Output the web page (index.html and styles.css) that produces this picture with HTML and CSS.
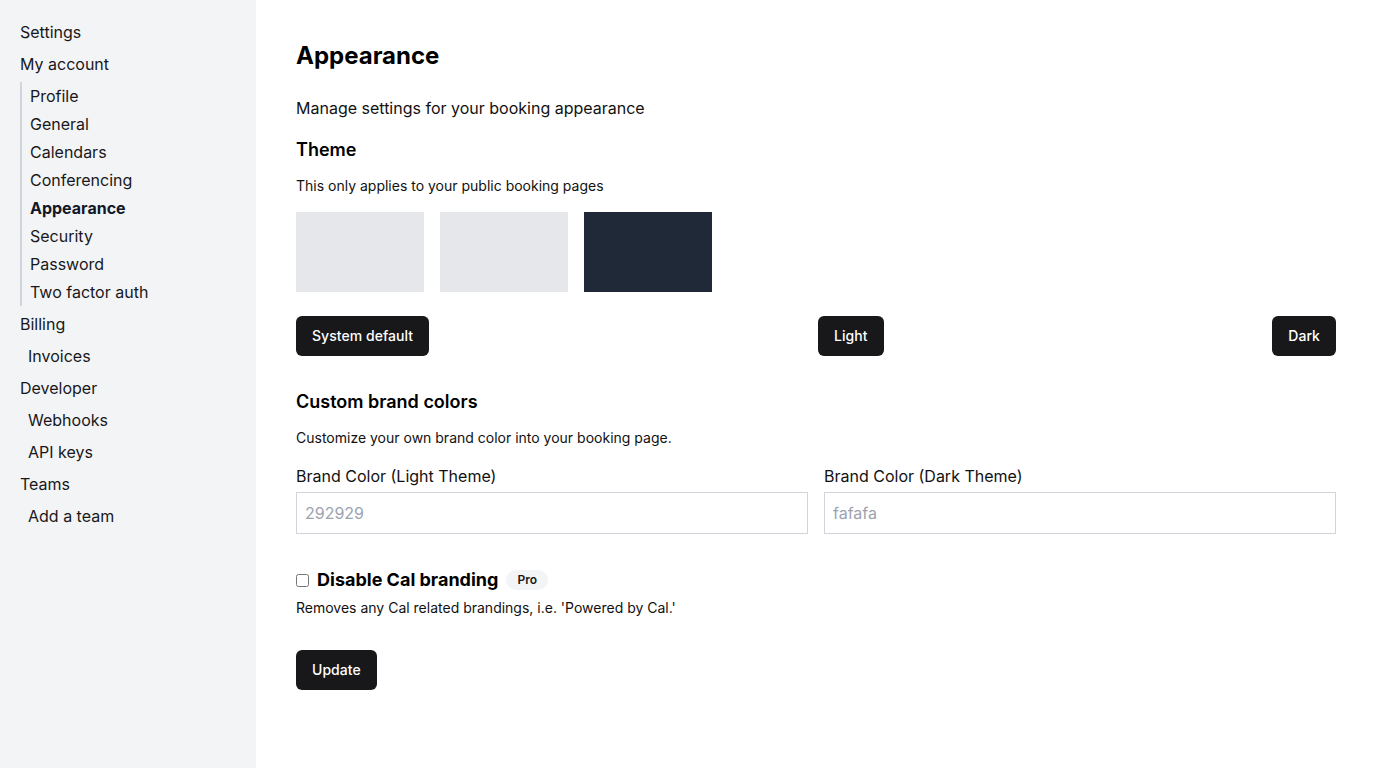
FILE: index.html
```html
<!DOCTYPE html>
<html>
<head>
<meta charset="utf-8">
<link rel="stylesheet" href="styles.css">
</head>
<body>
<div class="layout">
  <nav class="sidebar">
    <div class="nav-top">Settings</div>
    <div class="nav-top">My account</div>
    <div class="nav-group">
      <div class="nav-sub">Profile</div>
      <div class="nav-sub">General</div>
      <div class="nav-sub">Calendars</div>
      <div class="nav-sub">Conferencing</div>
      <div class="nav-sub active">Appearance</div>
      <div class="nav-sub">Security</div>
      <div class="nav-sub">Password</div>
      <div class="nav-sub">Two factor auth</div>
    </div>
    <div class="nav-top">Billing</div>
    <div class="nav-child">Invoices</div>
    <div class="nav-top">Developer</div>
    <div class="nav-child">Webhooks</div>
    <div class="nav-child">API keys</div>
    <div class="nav-top">Teams</div>
    <div class="nav-child">Add a team</div>
  </nav>
  <main class="main">
    <h1 class="title">Appearance</h1>
    <p class="lead">Manage settings for your booking appearance</p>
    <h2 class="section-title theme-title">Theme</h2>
    <p class="hint">This only applies to your public booking pages</p>
    <div class="swatches">
      <div class="swatch light"></div>
      <div class="swatch light"></div>
      <div class="swatch dark"></div>
    </div>
    <div class="theme-buttons">
      <button class="btn">System default</button>
      <button class="btn">Light</button>
      <button class="btn">Dark</button>
    </div>
    <h2 class="section-title brand-title">Custom brand colors</h2>
    <p class="hint">Customize your own brand color into your booking page.</p>
    <div class="brand-grid">
      <label class="field">
        <span class="field-label">Brand Color (Light Theme)</span>
        <input class="field-input" type="text" placeholder="292929">
      </label>
      <label class="field">
        <span class="field-label">Brand Color (Dark Theme)</span>
        <input class="field-input" type="text" placeholder="fafafa">
      </label>
    </div>
    <div class="branding-row">
      <input class="check" type="checkbox">
      <span class="branding-label">Disable Cal branding</span>
      <span class="badge">Pro</span>
    </div>
    <p class="hint branding-hint">Removes any Cal related brandings, i.e. 'Powered by Cal.'</p>
    <button class="btn update">Update</button>
  </main>
</div>
</body>
</html>
```

FILE: styles.css
```css
* { box-sizing: border-box; }
html, body { margin: 0; padding: 0; }
body {
  font-family: Inter, "Noto Sans", sans-serif;
  color: #111827;
  background: #fff;
}
.layout {
  display: flex;
  min-height: 768px;
}
.sidebar {
  width: 256px;
  flex: 0 0 256px;
  background: #f3f4f6;
  padding: 16px 20px;
  font-size: 16px;
  color: #18181b;
}
.nav-top {
  height: 32px;
  line-height: 32px;
}
.nav-group {
  margin: 2px 0;
  border-left: 2px solid #d1d5db;
  padding-left: 8px;
}
.nav-sub {
  height: 28px;
  line-height: 28px;
}
.nav-sub.active { font-weight: 700; color: #111827; }
.nav-child {
  height: 32px;
  line-height: 32px;
  padding-left: 8px;
}
.main {
  flex: 1;
  padding: 40px 40px;
  color: #000;
}
.title {
  margin: 1px 0 0;
  font-size: 24px;
  line-height: 30px;
  font-weight: 700;
}
.lead {
  margin: 25px 0 0;
  font-size: 16px;
  line-height: 24px;
  color: #111;
}
.section-title {
  margin: 0;
  font-size: 18px;
  line-height: 28px;
  font-weight: 600;
}
.theme-title { margin-top: 16px; }
.brand-title { margin-top: 32px; }
.hint {
  margin: 12px 0 0;
  font-size: 14px;
  line-height: 20px;
  color: #111;
}
.swatches {
  margin-top: 16px;
  display: flex;
  gap: 16px;
}
.swatch {
  width: 128px;
  height: 80px;
}
.swatch.light { background: #e5e7eb; }
.swatch.dark { background: #1f2937; }
.theme-buttons {
  margin-top: 24px;
  display: flex;
  justify-content: space-between;
}
.btn {
  height: 40px;
  padding: 0 16px 1px;
  border: 0;
  border-radius: 6px;
  background: #18181b;
  color: #fff;
  font-family: Inter, "Noto Sans", sans-serif;
  font-size: 14px;
  font-weight: 500;
  letter-spacing: 0.05px;
}
.brand-grid {
  margin-top: 16px;
  display: grid;
  grid-template-columns: 1fr 1fr;
  gap: 16px;
}
.field {
  display: flex;
  flex-direction: column;
  gap: 4px;
}
.field-label {
  font-size: 16px;
  line-height: 24px;
  color: #111;
}
.field-input {
  height: 42px;
  border: 1px solid #d1d5db;
  border-radius: 0;
  padding: 0 8px;
  font-family: Inter, "Noto Sans", sans-serif;
  font-size: 16px;
  color: #111;
  background: #fff;
}
.field-input::placeholder { color: #9ca3af; }
.branding-row {
  margin-top: 32px;
  display: flex;
  align-items: center;
  height: 28px;
}
.check {
  width: 13px;
  height: 13px;
  margin: 0 8px 0 0;
}
.branding-label {
  font-size: 18px;
  line-height: 28px;
  font-weight: 700;
}
.badge {
  margin-left: 8px;
  height: 20px;
  line-height: 20px;
  padding: 0 11px;
  border-radius: 10px;
  background: #f3f4f6;
  font-family: Inter, "Noto Sans", sans-serif;
  font-size: 12px;
  font-weight: 600;
  color: #18181b;
}
.branding-hint { margin-top: 4px; }
.update { margin-top: 32px; }
```
